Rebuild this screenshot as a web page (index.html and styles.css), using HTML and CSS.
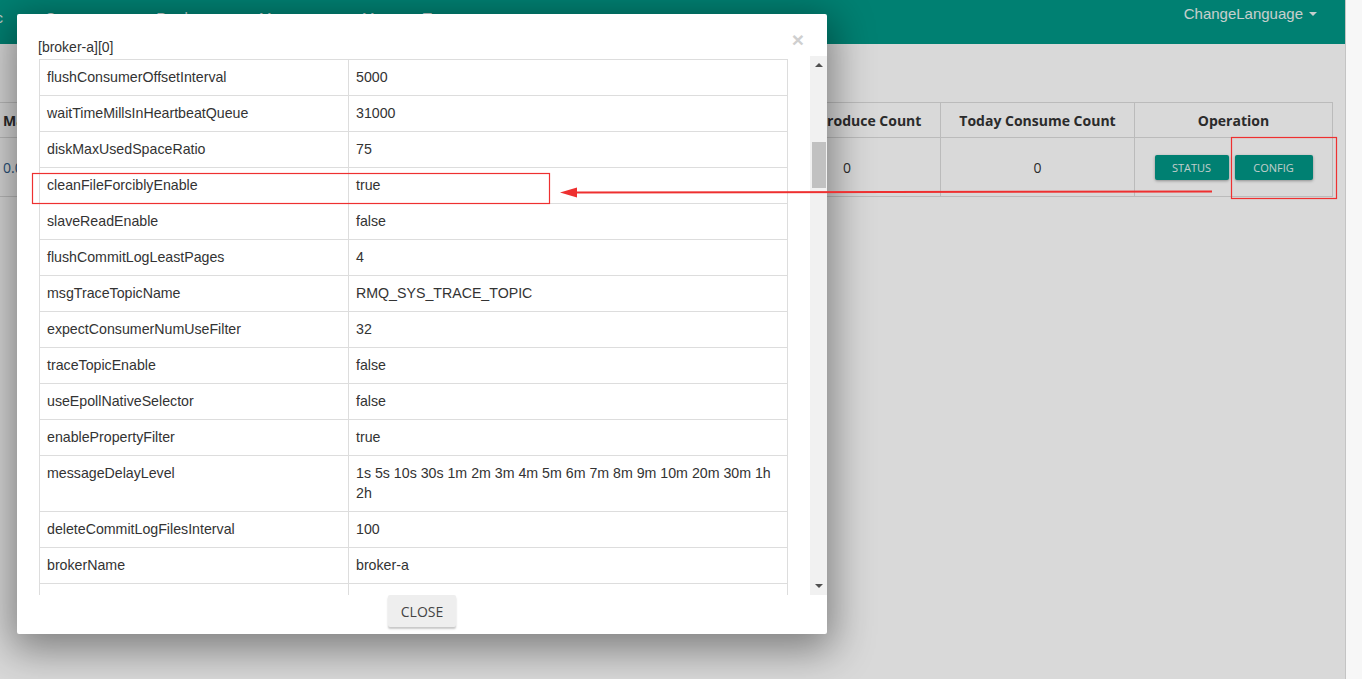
FILE: index.html
```html
<!DOCTYPE html>
<html>
<head>
<meta charset="utf-8">
<link rel="stylesheet" href="styles.css">
</head>
<body>
<div class="viewport">
  <div class="page">
    <nav class="navbar">
      <ul class="nav-items">
        <li>Topic</li>
        <li>Consumer</li>
        <li>Producer</li>
        <li>Message</li>
        <li>MessageTrace</li>
      </ul>
      <div class="lang">ChangeLanguage <span class="caret"></span></div>
    </nav>
    <main class="content">
      <table class="cluster">
        <colgroup>
          <col class="c1"><col class="c2"><col class="c3"><col class="c4"><col class="c5"><col class="c6"><col class="c7">
        </colgroup>
        <thead>
          <tr>
            <th class="left">Massage TPS</th>
            <th>Yesterday Produce Count</th>
            <th>Yesterday Consume Count</th>
            <th>Produce Massage TPS</th>
            <th>Today Produce Count</th>
            <th>Today Consume Count</th>
            <th>Operation</th>
          </tr>
        </thead>
        <tbody>
          <tr>
            <td class="left link">0.00</td>
            <td>0</td>
            <td>0</td>
            <td>0.00</td>
            <td>0</td>
            <td>0</td>
            <td>
              <div class="ops">
                <button class="btn-teal">Status</button>
                <button class="btn-teal wide">Config</button>
              </div>
            </td>
          </tr>
        </tbody>
      </table>
    </main>
    <div class="backdrop"></div>
  </div>
  <div class="win-scroll"></div>

  <div class="modal">
    <div class="modal-header">
      <span class="modal-title">[broker-a][0]</span>
      <span class="close-x">×</span>
    </div>
    <div class="modal-body">
      <div class="table-wrap">
        <table class="config">
          <colgroup><col class="k"><col class="v"></colgroup>
          <tbody>
            <tr><td>flushConsumerOffsetInterval</td><td>5000</td></tr>
            <tr><td>waitTimeMillsInHeartbeatQueue</td><td>31000</td></tr>
            <tr><td>diskMaxUsedSpaceRatio</td><td>75</td></tr>
            <tr><td>cleanFileForciblyEnable</td><td>true</td></tr>
            <tr><td>slaveReadEnable</td><td>false</td></tr>
            <tr><td>flushCommitLogLeastPages</td><td>4</td></tr>
            <tr><td>msgTraceTopicName</td><td>RMQ_SYS_TRACE_TOPIC</td></tr>
            <tr><td>expectConsumerNumUseFilter</td><td>32</td></tr>
            <tr><td>traceTopicEnable</td><td>false</td></tr>
            <tr><td>useEpollNativeSelector</td><td>false</td></tr>
            <tr><td>enablePropertyFilter</td><td>true</td></tr>
            <tr><td>messageDelayLevel</td><td>1s 5s 10s 30s 1m 2m 3m 4m 5m 6m 7m 8m 9m 10m 20m 30m 1h 2h</td></tr>
            <tr><td>deleteCommitLogFilesInterval</td><td>100</td></tr>
            <tr><td>brokerName</td><td>broker-a</td></tr>
            <tr><td>clientCallbackExecutorThreads</td><td>4</td></tr>
            <tr><td>transientStorePoolEnable</td><td>false</td></tr>
          </tbody>
        </table>
      </div>
      <div class="scrollbar">
        <span class="arrow up"></span>
        <div class="track"><div class="thumb"></div></div>
        <span class="arrow down"></span>
      </div>
    </div>
    <div class="modal-footer">
      <button class="btn-close">Close</button>
    </div>
  </div>

  <svg class="annot" width="1362" height="679" viewBox="0 0 1362 679">
    <rect x="32.5" y="173.5" width="517" height="30" fill="none" stroke="#ee3030" stroke-width="1.2"/>
    <rect x="1231.5" y="137.5" width="105" height="61" fill="none" stroke="#ee3030" stroke-width="1.2"/>
    <line x1="574" y1="192.5" x2="1212" y2="191.5" stroke="#ee3030" stroke-width="2"/>
    <polygon points="560,192.5 577,187.5 577,197.5" fill="#ee3030"/>
  </svg>
</div>
</body>
</html>
```
FILE: styles.css
```css
* { box-sizing: border-box; }
html, body { margin: 0; padding: 0; }
body { width: 1362px; height: 679px; overflow: hidden; background: #fff; }

.viewport { display: flex; width: 1362px; height: 679px; position: relative; overflow: hidden; }

.page { position: relative; flex: 1; height: 679px; background: #fff; overflow: hidden; }
.win-scroll { width: 17px; height: 679px; background: #f7f7f7; border-left: 1px solid #c4c4c4; }

.navbar {
  height: 44px;
  background: #009786;
  display: flex;
  justify-content: space-between;
  font-family: "Liberation Sans", Arial, sans-serif;
  font-size: 15px;
  line-height: 20px;
  color: #e9f3f1;
  padding-top: 4px;
}
.nav-items { list-style: none; margin: 0 0 0 -53px; padding: 4px 0 0; display: flex; }
.nav-items li { padding: 0 21px; }
.lang { padding-right: 28px; display: flex; align-items: center; height: 20px; gap: 4px; }
.caret { display: inline-block; width: 0; height: 0; border-left: 4px solid transparent; border-right: 4px solid transparent; border-top: 4px solid #e9f3f1; margin-left: 2px; }

.content { padding-top: 58px; }
.cluster {
  margin-left: -6px;
  width: 1338px;
  table-layout: fixed;
  border-collapse: collapse;
  font-family: "Open Sans", sans-serif;
  font-size: 14px;
  color: #333;
}
.cluster col.c1 { width: 156px; }
.cluster col.c2 { width: 200px; }
.cluster col.c3 { width: 203px; }
.cluster col.c4 { width: 200px; }
.cluster col.c5 { width: 187px; }
.cluster col.c6 { width: 194px; }
.cluster col.c7 { width: 198px; }
.cluster th, .cluster td { border: 1px solid #dcdcdc; text-align: center; white-space: nowrap; overflow: hidden; }
.cluster th { height: 35px; padding: 0 8px; font-weight: 700; }
.cluster td { height: 59px; padding: 0 8px; }
.cluster .left { text-align: left; }
.cluster .link { color: #2f5f8f; }
.ops { display: flex; justify-content: center; gap: 6px; }
.btn-teal {
  width: 74px; height: 25px;
  border: 0; border-radius: 2px;
  background: #009786;
  color: #e4f1ef;
  font-family: "Open Sans", sans-serif;
  font-size: 11px;
  text-transform: uppercase;
  box-shadow: 0 1px 3px rgba(0,0,0,.35);
  padding: 0;
}
.btn-teal.wide { width: 78px; }

.backdrop { position: absolute; inset: 0; background: rgba(0,0,0,.15); }

.modal {
  position: absolute;
  left: 17px; top: 14px;
  width: 810px; height: 620px;
  background: #fff;
  border-radius: 2px;
  box-shadow: 0 10px 40px 6px rgba(0,0,0,.42);
  display: flex;
  flex-direction: column;
  font-family: "Liberation Sans", Arial, sans-serif;
  font-size: 14px;
  color: #333;
}
.modal-header {
  display: flex;
  justify-content: space-between;
  align-items: flex-start;
  padding: 23px 23px 0 21px;
  height: 42px;
  line-height: 20px;
}
.close-x {
  font-size: 21px;
  font-weight: 700;
  color: #cfcfcf;
  line-height: 20px;
  margin-top: -7px;
}
.modal-body {
  display: flex;
  height: 539px;
  padding-left: 22px;
}
.table-wrap { flex: 1; overflow: hidden; padding-top: 3px; }
.config { width: 748px; table-layout: fixed; border-collapse: collapse; }
.config col.k { width: 309px; }
.config col.v { width: 439px; }
.config td { border: 1px solid #ddd; padding: 7px 8px 8px 7px; line-height: 20px; vertical-align: top; font-size: 14.2px; }

.scrollbar { width: 17px; background: #f1f1f1; display: flex; flex-direction: column; align-items: center; }
.arrow { width: 0; height: 0; border-left: 4px solid transparent; border-right: 4px solid transparent; }
.arrow.up { border-bottom: 4px solid #505050; margin-top: 7px; }
.arrow.down { border-top: 4px solid #505050; margin-bottom: 7px; }
.track { flex: 1; width: 100%; padding: 0 1px 0 2px; }
.thumb { margin-top: 75px; height: 46px; background: #c1c1c1; }

.modal-footer { display: flex; justify-content: center; padding-top: 0; }
.btn-close {
  width: 68px; height: 32px;
  border: 0; border-radius: 2px;
  background: #eeeeee;
  color: #444;
  font-family: "Open Sans", sans-serif;
  font-size: 14px;
  text-transform: uppercase;
  box-shadow: 0 2px 2px rgba(0,0,0,.22);
  padding: 0;
}

.annot { position: absolute; left: 0; top: 0; pointer-events: none; }
```
